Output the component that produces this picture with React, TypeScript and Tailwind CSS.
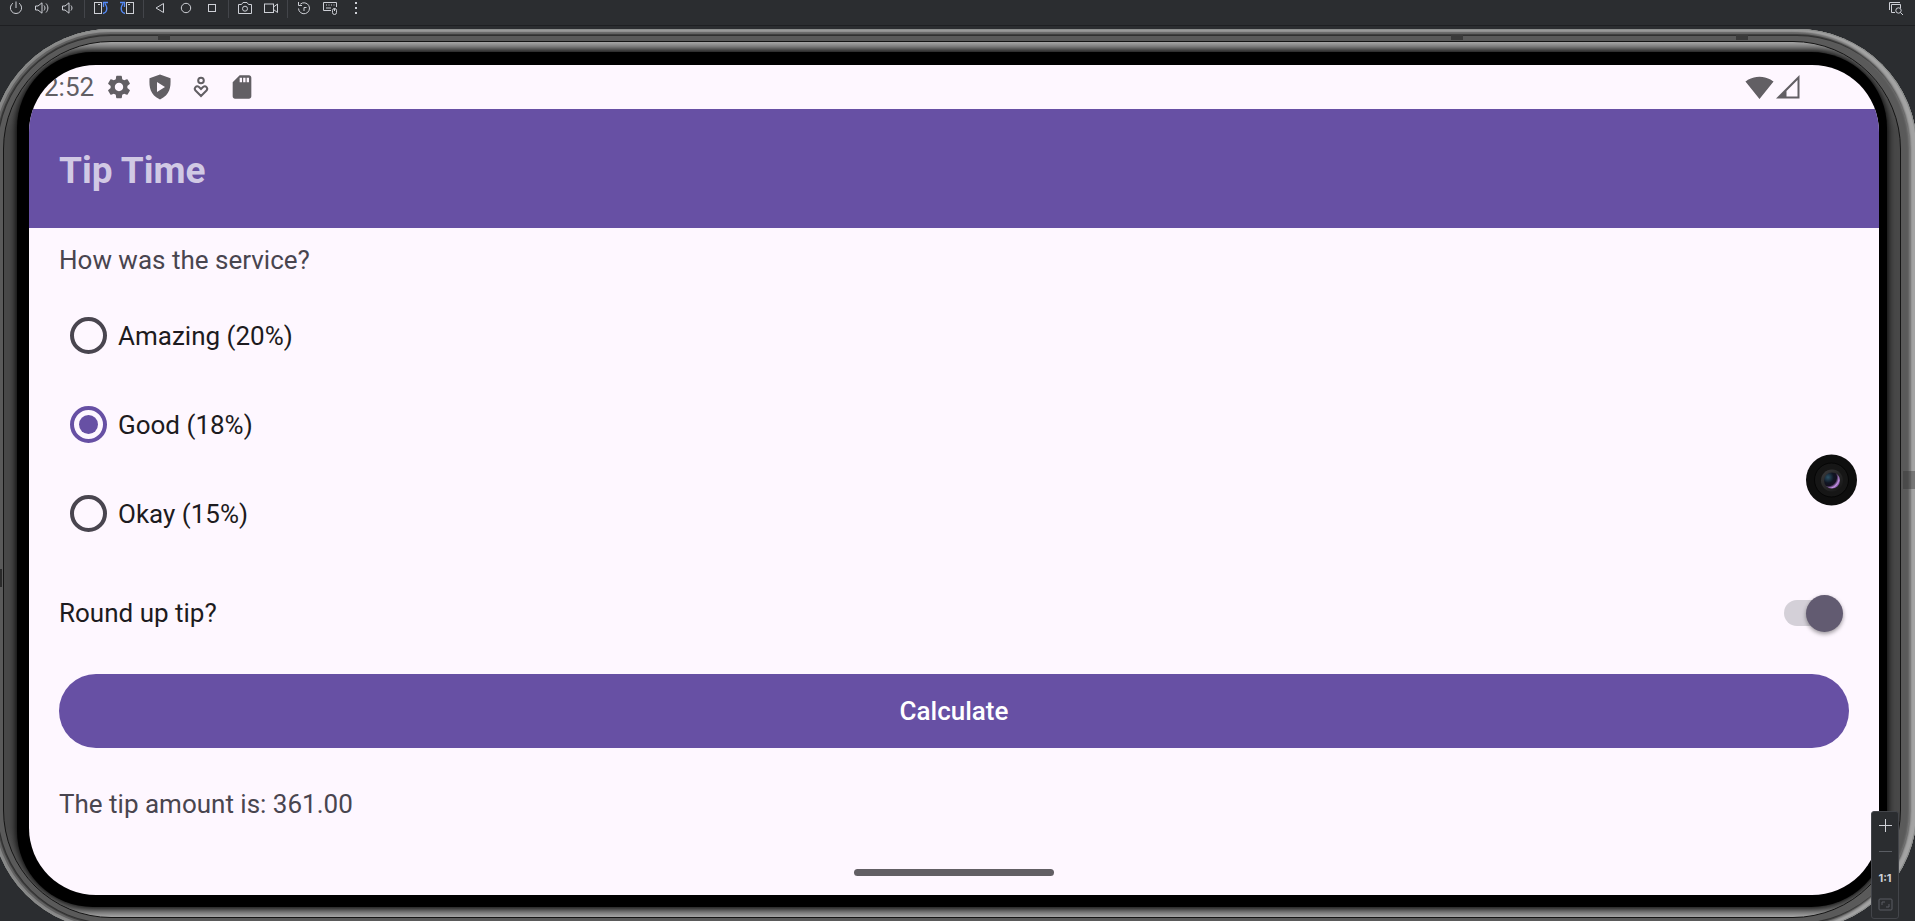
import { useState } from "react";
import type { ReactNode } from "react";
import { MdSettings, MdSdCard, MdSignalWifi4Bar } from "react-icons/md";

function Glyph({ children, label }: { children: ReactNode; label: string }) {
  return (
    <button type="button" aria-label={label} className="flex h-4 w-[26px] shrink-0 items-center justify-center text-[#ced0d6]">
      <svg width="16" height="16" viewBox="0 0 16 16" fill="none" stroke="currentColor" strokeWidth="1">
        {children}
      </svg>
    </button>
  );
}

function Separator() {
  return <span className="mx-[3px] h-[18px] w-px shrink-0 bg-[#43454a]" />;
}

function Toolbar() {
  return (
    <header className="flex h-[26px] shrink-0 items-start justify-between border-b border-[#1e1f22] bg-[#2b2d30] pr-[6px] pl-[3px]">
      <div className="flex items-start">
        <Glyph label="Power">
          <path d="M8 1.500v6.500M5 3.200a5.600 5.600 0 1 0 6 0" />
        </Glyph>
        <Glyph label="Volume up">
          <path d="M1.500 6v4h2.500l4 3.200V2.800L4 6zM10 5.500c1.300 1.500 1.300 3.500 0 5M12 3.500c2.500 2.700 2.500 6.300 0 9" />
        </Glyph>
        <Glyph label="Volume down">
          <path d="M2.500 6v4h2.500l4 3.200V2.800L5 6zM11 5.500c1.300 1.500 1.300 3.500 0 5" />
        </Glyph>
        <Separator />
        <Glyph label="Rotate left">
          <rect x="1.500" y="2.500" width="7" height="11" />
          <path d="M5 4.500h2" />
          <path d="M10 13.500c3.500-.5 5.500-5 2-10M10.500 7V2.500H15" stroke="#548af7" strokeWidth="1.300" />
        </Glyph>
        <Glyph label="Rotate right">
          <rect x="7.500" y="2.500" width="7" height="11" />
          <path d="M9 4.500h2" />
          <path d="M6 13.500C2.500 13 .5 8.500 4 3.500M5.500 7V2.500H1" stroke="#548af7" strokeWidth="1.300" />
        </Glyph>
        <Separator />
        <Glyph label="Back">
          <path d="M11.500 3.500v9L4 8z" />
        </Glyph>
        <Glyph label="Home">
          <circle cx="8" cy="8" r="4.700" />
        </Glyph>
        <Glyph label="Overview">
          <rect x="4.500" y="4.500" width="7" height="7" />
        </Glyph>
        <Separator />
        <Glyph label="Take screenshot">
          <path d="M1.500 4.500h3L6 2.500h4l1.500 2h3v9h-13z" />
          <circle cx="8" cy="8.700" r="2.500" />
        </Glyph>
        <Glyph label="Record screen">
          <rect x="1.500" y="4" width="9" height="8.500" />
          <path d="M10.500 7l4-3v8.500l-4-3" />
        </Glyph>
        <Separator />
        <Glyph label="Snapshots">
          <path d="M2.500 8.500a5.500 5.500 0 1 0 1.800-4.300M2.500 2v3.500H6M8 11V7.500h2.500" />
        </Glyph>
        <Glyph label="Hardware input">
          <path d="M9 10.500H1.500v-8h13V7M4 5h1M6.500 5h1M9 5h1M11.500 5h1M4 8h5" />
          <rect x="10.500" y="8.500" width="4" height="6" rx="2" />
          <path d="M12.500 8.500v2.500" />
        </Glyph>
        <Glyph label="More actions">
          <g fill="currentColor" stroke="none">
            <rect x="7" y="2" width="2" height="2" />
            <rect x="7" y="7" width="2" height="2" />
            <rect x="7" y="12" width="2" height="2" />
          </g>
        </Glyph>
      </div>
      <Glyph label="Layout inspector">
        <path d="M1.500 10V2.500H12M7 12.500H3.500v-8h9V8" />
        <circle cx="10.500" cy="10.500" r="2.700" />
        <path d="M12.500 12.500l2.500 2.500" />
      </Glyph>
    </header>
  );
}

function StatusBar() {
  return (
    <div className="flex h-[44px] items-center justify-between pr-[79px] pl-[15px] text-[#625f64]">
      <div className="flex items-center">
        <span className="w-[61px] text-[26px] leading-8">2:52</span>
        <MdSettings size={28} />
        <svg className="ml-[13px]" width="28" height="28" viewBox="0 0 28 28" fill="currentColor" fillRule="evenodd">
          <path d="M14 1.500 24.500 5.200c.4 9.500-.5 16.300-10.500 21.300C4 21.500 3.100 14.700 3.500 5.200zM11 9v10l8-5z" />
        </svg>
        <svg className="ml-[13px]" width="28" height="28" viewBox="0 0 28 28" fill="none" stroke="currentColor" strokeWidth="2">
          <circle cx="14" cy="7.500" r="2.800" />
          <path d="M14 23 8.500 17.500c-2-2.300.8-5.600 3.500-3.500l2 2 2-2c2.700-2.100 5.500 1.200 3.500 3.500z" />
        </svg>
        <MdSdCard className="ml-[13px]" size={28} />
      </div>
      <div className="flex items-center gap-[2px]">
        <MdSignalWifi4Bar size={29} />
        <svg width="24" height="24" viewBox="0 0 24 24" fill="currentColor" fillRule="evenodd">
          <path d="M0 23.500 23.500 0v23.500zM10.500 16v5.500h11V5z" />
        </svg>
      </div>
    </div>
  );
}

const services = ["Amazing (20%)", "Good (18%)", "Okay (15%)"];

function TipForm() {
  const [service, setService] = useState(services[1]);
  const [roundUp, setRoundUp] = useState(true);
  return (
    <form className="flex flex-col px-[30px] text-[26px] leading-8 text-[#49454f]" onSubmit={(e) => e.preventDefault()}>
      <fieldset>
        <legend className="pt-4 pb-[15px]">How was the service?</legend>
        {services.map((name) => (
          <label key={name} className="flex h-[89px] items-center gap-[11px] pl-[11px] text-[#1d1b20]">
            <input
              type="radio"
              name="service"
              checked={service === name}
              onChange={() => setService(name)}
              className="flex size-[37px] shrink-0 appearance-none items-center justify-center rounded-full border-4 border-[#49454f] before:size-[19px] before:rounded-full checked:border-[#6750a4] checked:before:bg-[#6750a4]"
            />
            {name}
          </label>
        ))}
      </fieldset>
      <label className="flex h-[110px] items-center justify-between pr-[6px] text-[#1d1b20]">
        Round up tip?
        <input
          type="checkbox"
          role="switch"
          checked={roundUp}
          onChange={(e) => setRoundUp(e.target.checked)}
          className="flex h-[38px] w-[59px] shrink-0 appearance-none items-center before:h-[26px] before:w-[52px] before:rounded-full before:bg-[#d4d0d8] after:-ml-[52px] after:size-[37px] after:rounded-full after:bg-[#625b71] after:shadow-[0_2px_4px_rgba(0,0,0,0.4)] checked:after:-ml-[30px]"
        />
      </label>
      <button type="submit" className="mt-[6px] h-[74px] rounded-full bg-[#6750a4] font-medium text-white">
        Calculate
      </button>
      <output className="mt-10">The tip amount is: 361.00</output>
    </form>
  );
}

function Camera() {
  return (
    <div className="absolute top-1/2 right-[22px] flex size-[51px] -translate-y-1/2 items-center justify-center rounded-full bg-[#0e0e0e]">
      <div className="flex size-[35px] items-center justify-center rounded-full border border-[#050505] bg-[#161616]">
        <div className="flex size-[22px] items-center justify-center rounded-full bg-linear-to-br from-[#3c3c3e] to-[#141414]">
          <div className="size-4 rounded-full bg-[radial-gradient(circle_at_25%_30%,#2b5266_0%,#101522_35%,#141020_52%,#c490e6_68%,#42245a_85%)]" />
        </div>
      </div>
    </div>
  );
}

function Device() {
  return (
    <div className="relative mt-[3px] -mr-[2px] -ml-[9px] rounded-[120px] bg-[#5a5a5a] pt-3 pr-4 pb-3 pl-3 shadow-[inset_0_0_0_1px_#8b8d8c,inset_-5px_0_3px_2px_#a4a4a4,inset_0_0_0_3px_#858585,inset_0_0_0_5px_#626262,inset_0_0_0_6px_#404040,inset_0_0_0_7px_#303030]">
      <span className="absolute top-[6px] left-[167px] h-[5px] w-3 bg-[#3a3a3a]" />
      <span className="absolute top-[6px] right-[454px] h-[5px] w-3 bg-[#3a3a3a]" />
      <span className="absolute top-[6px] right-[169px] h-[5px] w-3 bg-[#3a3a3a]" />
      <span className="absolute top-[540px] left-[7px] h-[18px] w-1 bg-[#2b2b2b]" />
      <span className="absolute top-[442px] right-[2px] h-[18px] w-3 bg-[#333333]/40" />
      <div className="overflow-hidden rounded-[108px] border border-[#141414] bg-[linear-gradient(to_bottom,#a4a4a4_0px,#6c6c6c_9px,#484848_90px,#484848_calc(100%-90px),#6c6c6c_calc(100%-9px),#a4a4a4_100%)] px-[13px] py-[10px]">
        <div className="rounded-[76px] bg-black pt-[13px] pr-2 pb-3 pl-3 shadow-[0_0_7px_1px_#000]">
          <main className="relative overflow-hidden rounded-[67px] bg-[#fef7ff]">
            <StatusBar />
            <h1 className="flex h-[119px] items-center bg-[#6750a4] px-[30px] pt-1 text-[37px] font-bold text-[#d1c9e4]">Tip Time</h1>
            <TipForm />
            <div className="mx-auto mt-[49px] mb-[19px] h-[7px] w-[200px] rounded-full bg-[#625f64]" />
            <Camera />
          </main>
        </div>
      </div>
    </div>
  );
}

function ZoomPanel() {
  return (
    <div className="absolute right-4 bottom-[2px] flex h-[108px] w-7 flex-col items-center justify-between rounded-[3px] border border-[#43454a] bg-[#2b2d30] py-[6px] text-[#ced0d6]">
      <button type="button" aria-label="Zoom in">
        <svg width="15" height="15" viewBox="0 0 15 15" stroke="currentColor">
          <path d="M1 7.500h13M7.500 1v13" />
        </svg>
      </button>
      <button type="button" aria-label="Zoom out" disabled className="text-[#5a5d63]">
        <svg width="15" height="15" viewBox="0 0 15 15" stroke="currentColor">
          <path d="M1 7.500h13" />
        </svg>
      </button>
      <button type="button" className="font-['Inter','Liberation_Sans',sans-serif] text-[11px] leading-4 font-bold">
        1:1
      </button>
      <button type="button" aria-label="Fit screen" disabled className="text-[#5a5d63]">
        <svg width="15" height="15" viewBox="0 0 15 15" fill="none" stroke="currentColor">
          <rect x="1" y="2" width="13" height="11" rx="1" />
          <path d="M4 8V5h3M11 7v3H8" />
        </svg>
      </button>
    </div>
  );
}

export default function App() {
  return (
    <div className="flex h-screen flex-col overflow-hidden bg-[#2b2d30] font-['Roboto','Liberation_Sans',sans-serif]">
      <Toolbar />
      <div className="relative min-h-0 flex-1 overflow-hidden">
        <Device />
        <ZoomPanel />
      </div>
    </div>
  );
}
